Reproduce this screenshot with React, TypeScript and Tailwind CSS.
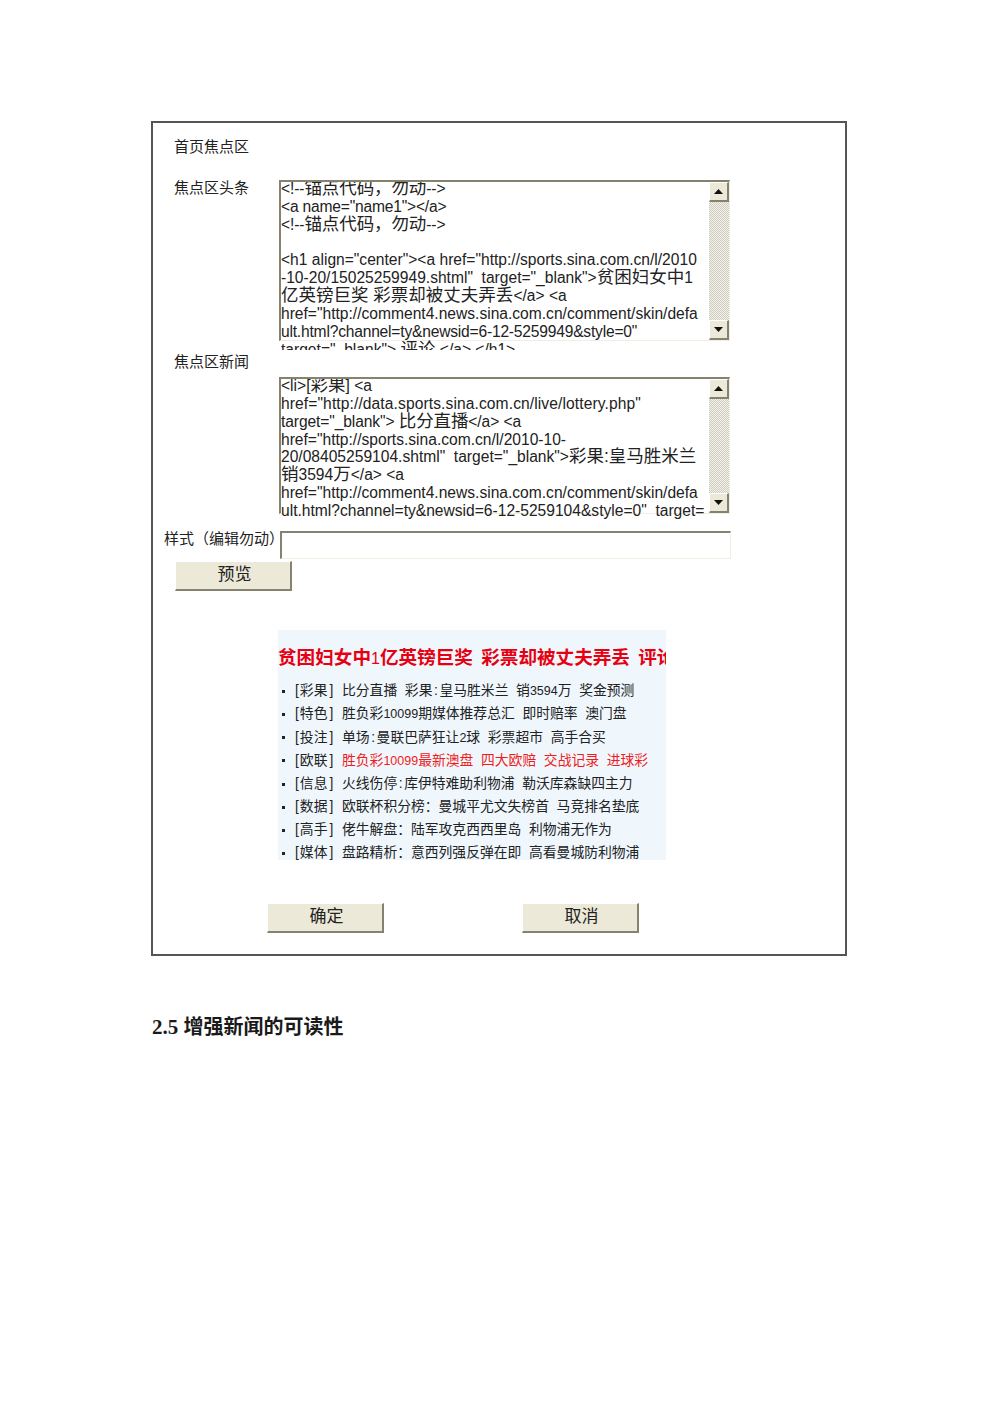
import type { ReactNode } from 'react'

const cjk = "font-['Liberation_Sans','Noto_Sans_CJK_SC',sans-serif]"

const Cn = ({ children }: { children: ReactNode }) => <span className="text-[17.5px]">{children}</span>

const lineasTitular: ReactNode[] = [
  <span className="tracking-[-0.1px]">&lt;!--<Cn>锚点代码，勿动</Cn>--&gt;</span>,
  <span className="tracking-[-0.2px]">&lt;a name="name1"&gt;&lt;/a&gt;</span>,
  <span className="tracking-[-0.1px]">&lt;!--<Cn>锚点代码，勿动</Cn>--&gt;</span>,
  <>&nbsp;</>,
  <>&lt;h1 align="center"&gt;&lt;a href="http://sports.sina.com.cn/l/2010</>,
  <>-10-20/15025259949.shtml"  target="_blank"&gt;<Cn>贫困妇女中</Cn>1</>,
  <><Cn>亿英镑巨奖 彩票却被丈夫弄丢</Cn>&lt;/a&gt; &lt;a</>,
  <>href="http://comment4.news.sina.com.cn/comment/skin/defa</>,
  <span className="tracking-[-0.2px]">ult.html?channel=ty&amp;newsid=6-12-5259949&amp;style=0"</span>,
  <>target="_blank"&gt; <Cn>评论</Cn> &lt;/a&gt; &lt;/h1&gt;</>,
]

const lineasNoticias: ReactNode[] = [
  <>&lt;li&gt;[<Cn>彩果</Cn>] &lt;a</>,
  <span className="tracking-[0.1px]">href="http://data.sports.sina.com.cn/live/lottery.php"</span>,
  <span className="tracking-[-0.1px]">target="_blank"&gt; <Cn>比分直播</Cn>&lt;/a&gt; &lt;a</span>,
  <>href="http://sports.sina.com.cn/l/2010-10-</>,
  <>20/08405259104.shtml"  target="_blank"&gt;<Cn>彩果:皇马胜米兰</Cn></>,
  <><Cn>销</Cn>3594<Cn>万</Cn>&lt;/a&gt; &lt;a</>,
  <>href="http://comment4.news.sina.com.cn/comment/skin/defa</>,
  <>ult.html?channel=ty&amp;newsid=6-12-5259104&amp;style=0"  target=</>,
]

const noticias = [
  { tag: '彩果', texto: '比分直播  彩果:皇马胜米兰  销3594万  奖金预测' },
  { tag: '特色', texto: '胜负彩10099期媒体推荐总汇  即时赔率  澳门盘' },
  { tag: '投注', texto: '单场:曼联巴萨狂让2球  彩票超市  高手合买' },
  { tag: '欧联', texto: '胜负彩10099最新澳盘  四大欧赔  交战记录  进球彩', rojo: true },
  { tag: '信息', texto: '火线伤停:库伊特难助利物浦  勒沃库森缺四主力' },
  { tag: '数据', texto: '欧联杯积分榜：曼城平尤文失榜首  马竞排名垫底' },
  { tag: '高手', texto: '佬牛解盘：陆军攻克西西里岛  利物浦无作为' },
  { tag: '媒体', texto: '盘路精析：意西列强反弹在即  高看曼城防利物浦' },
]

// los digitos van mas chicos y los dos puntos mas anchos, como en la captura
function TextoNoticia({ texto }: { texto: string }) {
  return (
    <>
      {texto.split(/(\d+|:)/).map((t, i) => {
        if (/^\d+$/.test(t)) return <span key={i} className="text-[12.5px]">{t}</span>
        if (t === ':') return <span key={i} className="inline-block w-[7px] text-center">:</span>
        return <span key={i}>{t}</span>
      })}
    </>
  )
}

function Flecha({ abajo }: { abajo?: boolean }) {
  return (
    <div className="w-5 h-5 shrink-0 bg-[#ece9d8] border-t border-l border-white border-r-2 border-b-2 border-r-[#85836f] border-b-[#85836f] flex items-center justify-center">
      <svg width="9" height="5" viewBox="0 0 9 5">
        <path d={abajo ? 'M0 0h9L4.5 5z' : 'M0 5h9L4.5 0z'} fill="#111" />
      </svg>
    </div>
  )
}

function Barra() {
  return (
    <div className="w-5 shrink-0 self-stretch flex flex-col">
      <Flecha />
      <div className="flex-1 bg-[repeating-conic-gradient(#cfcdc2_0_25%,#f2f1ea_0_50%)] bg-[length:2px_2px]" />
      <Flecha abajo />
    </div>
  )
}

function AreaTexto({ lineas, alto, altoTexto }: { lineas: ReactNode[]; alto: string; altoTexto: string }) {
  return (
    <div className={`ml-[126px] w-[451px] flex border-t-2 border-l-2 border-[#85836f] border-r border-b border-r-[#f1efe2] border-b-[#f1efe2] bg-white ${alto}`}>
      <div className={`flex-1 min-w-0 overflow-hidden text-[15.6px] leading-[17.85px] text-[#222] whitespace-pre ${altoTexto}`}>
        <div className="-mt-[2px]">
          {lineas.map((l, i) => (
            <div key={i} className="h-[17.85px]">{l}</div>
          ))}
        </div>
      </div>
      <Barra />
    </div>
  )
}

function Boton({ texto, clase }: { texto: string; clase: string }) {
  return (
    <div className={`w-[117px] h-[30px] pl-[3px] pb-px bg-[#ece9d8] border-t border-l border-white border-r-2 border-b-2 border-r-[#85836f] border-b-[#85836f] flex items-center justify-center text-[17px] text-[#222] ${clase}`}>
      {texto}
    </div>
  )
}

export default function App() {
  return (
    <div className={`${cjk} h-[1415px] bg-white pt-[121px] pl-[151px] overflow-hidden`}>
      {/* Marco del formulario */}
      <div className="w-[696px] h-[835px] border-2 border-[#555] pt-[15px] text-[#222]">
        <div className="pl-[21px] h-[18px] leading-[18px] text-[15px]">首页焦点区</div>

        <div className="mt-[24px] pl-[21px] h-0 leading-[16px] text-[15px]">焦点区头条</div>
        <AreaTexto lineas={lineasTitular} alto="h-[161px]" altoTexto="h-[168px]" />

        <div className="mt-[12px] pl-[21px] h-[18px] leading-[18px] text-[15px]">焦点区新闻</div>
        <div className="mt-[6px]">
          <AreaTexto lineas={lineasNoticias} alto="h-[137px]" altoTexto="h-[140px]" />
        </div>

        <div className="mt-[17px] pl-[11px] flex h-[28px]">
          <span className="w-[116px] shrink-0 text-[15px] leading-[16px] whitespace-nowrap">样式（编辑勿动）</span>
          <div className="w-[451px] h-[28px] border-t-2 border-l-2 border-[#85836f] border-r border-b border-r-[#f1efe2] border-b-[#f1efe2]" />
        </div>

        <Boton texto="预览" clase="ml-[22px] mt-[2px]" />

        {/* Vista previa */}
        <div className="mt-[39px] ml-[125px] w-[388px] h-[230px] bg-[#eff7fd] overflow-hidden whitespace-pre">
          <div className="pt-[15px] h-[44px] text-[18.6px] leading-[26px] font-bold text-[#e60012] [word-spacing:-1px]">
            贫困妇女中<span className="text-[16px] font-normal">1</span>亿英镑巨奖  彩票却被丈夫弄丢  评论
          </div>
          <div className="mt-[6px]">
            {noticias.map(n => (
              <div key={n.tag} className="h-[23.15px] flex items-center text-[13.8px]">
                <span className="w-[3px] h-[3px] ml-[4px] bg-[#222]" />
                <span className="ml-[10px] w-[47px]">[<span className="ml-px mr-[2px]">{n.tag}</span>]</span>
                <span className={n.rojo ? 'text-[#f01c1c]' : ''}><TextoNoticia texto={n.texto} /></span>
              </div>
            ))}
          </div>
        </div>

        <div className="mt-[43px] ml-[114px] flex gap-[138px]">
          <Boton texto="确定" clase="" />
          <Boton texto="取消" clase="" />
        </div>
      </div>

      <h2 className="mt-[58px] ml-px text-[20px] leading-[26px] font-bold text-[#1a1a1a]">
        <span className="font-['Liberation_Serif'] text-[21px]">2.5 </span>增强新闻的可读性
      </h2>
    </div>
  )
}
